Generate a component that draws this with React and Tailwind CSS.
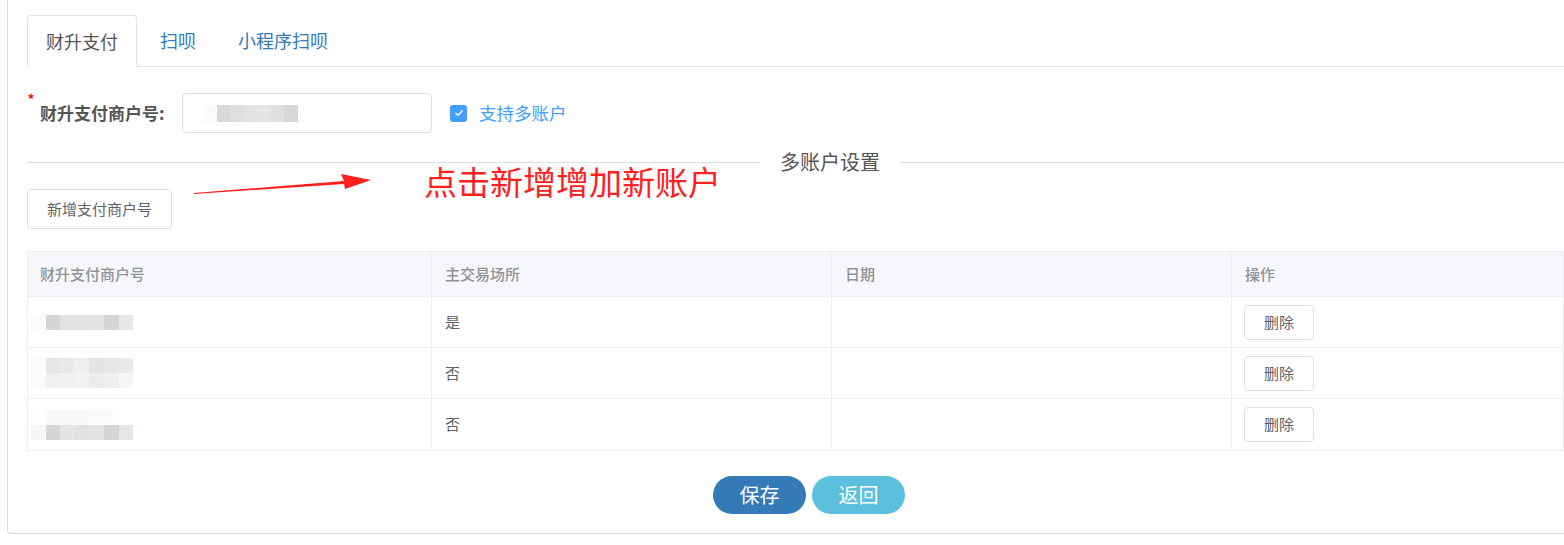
import React from "react";

const font = { fontFamily: '"Microsoft YaHei", "Noto Sans CJK SC", "Noto Sans", sans-serif' };

// mosaic blur used to hide account numbers
function Mosaic({ rows, cell = 15, h = 15, className = "" }) {
  return (
    <div className={"flex flex-col " + className}>
      {rows.map((r, i) => (
        <div key={i} className="flex">
          {r.map((c, j) => (
            <div key={j} style={{ width: cell, height: h, background: c }} />
          ))}
        </div>
      ))}
    </div>
  );
}

const rowsData = [
  {
    v: "是",
    mosaic: [["#fbfbfb", "#d6d6d8", "#e3e3e3", "#e2e3e3", "#e4e4e4", "#d5d5d7", "#e6e8e6"]],
  },
  {
    v: "否",
    mosaic: [
      ["#fbfbfb", "#e6e6e7", "#e9e9ea", "#efefef", "#e4e4e5", "#e7e7e8", "#eaeaeb"],
      ["#fbfbfb", "#f0f0f0", "#f1f1f1", "#f4f4f4", "#ececec", "#efefef", "#f6f6f6"],
    ],
  },
  {
    v: "否",
    mosaic: [
      ["#fdfdfd", "#f9f9f9", "#f8f8f8", "#f8f8f8", "#fafafa", "#fbfbfb", "#ffffff"],
      ["#f6f6f6", "#d6d6d8", "#e5e5e5", "#e1e1e2", "#e3e3e3", "#d6d6d8", "#e5e7e5"],
    ],
  },
];

export default function App() {
  return (
    <div className="bg-white w-[1564px] h-[545px] overflow-hidden" style={font}>
      <div className="relative ml-[7px] h-[534px] border-l border-b border-[#dcdcdc] rounded-bl-[4px] pl-[19px] pt-[15px]">
        {/* Tabs */}
        <div className="flex items-end border-b border-[#dfe4ed] h-[52px]">
          <div className="h-[52px] w-[110px] -mb-px flex items-center justify-center border border-b-white border-[#dfe4ed] rounded-t-[4px] bg-white text-[18px] text-[#555]">
            财升支付
          </div>
          <div className="h-[51px] flex items-center pl-[23px] text-[18px] text-[#337ab7]">扫呗</div>
          <div className="h-[51px] flex items-center pl-[42px] text-[18px] text-[#337ab7]">小程序扫呗</div>
        </div>

        {/* Merchant no. row */}
        <div className="flex items-center mt-[26px] h-[40px]">
          <div className="relative w-[155px] pl-[13px] text-[17px] font-bold text-[#555] whitespace-nowrap">
            <span className="absolute left-0 -top-[9px] text-[#f00] text-[17px] font-normal leading-none">*</span>
            财升支付商户号:
          </div>
          <div className="w-[250px] h-[40px] rounded-[4px] border border-[#dcdfe6] flex items-center pl-[20px]">
            <Mosaic rows={[["#fafafa", "#d8d8da", "#dfdfdf", "#e3e3e5", "#e5e5e6", "#e0e0e0", "#d7d7d9"]]} cell={13.5} h={17} />
          </div>
          <label className="flex items-center ml-[18px]">
            <span className="w-[17px] h-[17px] rounded-[3px] bg-[#409eff] flex items-center justify-center">
              <svg width="10" height="8" viewBox="0 0 10 8" fill="none">
                <path d="M1.5 4 L4 6.3 L8.5 1.5" stroke="white" strokeWidth="1.4" />
              </svg>
            </span>
            <span className="ml-[12px] text-[17.5px] text-[#409eff]">支持多账户</span>
          </label>
        </div>

        {/* Divider */}
        <div className="flex items-center mt-[19px] h-[20px]">
          <div className="w-[733px] border-t border-[#dcdfe6]" />
          <span className="px-[20px] text-[20px] text-[#555] leading-none">多账户设置</span>
          <div className="flex-1 border-t border-[#dcdfe6]" />
        </div>

        {/* Add button */}
        <button className="mt-[17px] h-[40px] w-[145px] rounded-[4px] border border-[#dcdfe6] bg-white text-[15px] text-[#606266]">
          新增支付商户号
        </button>

        {/* Table */}
        <div className="mt-[22px] border border-[#ebeef5]">
          <div className="grid grid-cols-[404px_400px_400px_1fr] h-[45px] bg-[#f5f7fa] text-[15px] text-[#909399] font-medium border-b border-[#ebeef5]">
            <div className="flex items-center pl-[12px] border-r border-[#ebeef5]">财升支付商户号</div>
            <div className="flex items-center pl-[13px] border-r border-[#ebeef5]">主交易场所</div>
            <div className="flex items-center pl-[13px] border-r border-[#ebeef5]">日期</div>
            <div className="flex items-center pl-[13px]">操作</div>
          </div>
          {rowsData.map((r, i) => (
            <div
              key={i}
              className={"grid grid-cols-[404px_400px_400px_1fr] h-[51px] text-[15px] text-[#606266] " + (i < 2 ? "border-b border-[#ebeef5]" : "")}
            >
              <div className="flex items-center pl-[3px] border-r border-[#ebeef5]">
                <Mosaic rows={r.mosaic} cell={14.6} />
              </div>
              <div className="flex items-center pl-[13px] border-r border-[#ebeef5]">{r.v}</div>
              <div className="border-r border-[#ebeef5]" />
              <div className="flex items-center pl-[12px]">
                <button className="h-[35px] w-[70px] rounded-[4px] border border-[#dcdfe6] bg-white text-[15px] text-[#606266]">
                  删除
                </button>
              </div>
            </div>
          ))}
        </div>

        {/* Footer buttons */}
        <div className="flex justify-center gap-[6px] mt-[25px] pl-[27px]">
          <button className="w-[93px] h-[38px] rounded-full bg-[#337ab7] text-white text-[20px]">保存</button>
          <button className="w-[93px] h-[38px] rounded-full bg-[#5bc0de] text-white text-[20px]">返回</button>
        </div>

        {/* Annotation */}
        <svg className="absolute left-[186px] top-[172px]" width="180" height="24" viewBox="0 0 180 24">
          <polygon points="0,21 150,9 147,2 177,8 151,17 150,12 0,22" fill="#ff1e1e" />
        </svg>
        <div className="absolute left-[416px] top-[159px] text-[33px] leading-[44px] text-[#ff2020] whitespace-nowrap">点击新增增加新账户</div>
      </div>
    </div>
  );
}
